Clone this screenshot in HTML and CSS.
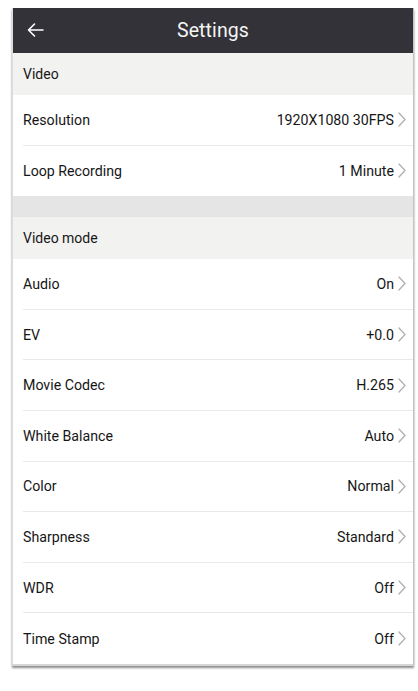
FILE: index.html
```html
<!DOCTYPE html>
<html lang="en">
<head>
<meta charset="utf-8">
<meta name="viewport" content="width=device-width, initial-scale=1.0">
<title>Settings</title>
<link rel="stylesheet" href="styles.css">
</head>
<body>
<div class="phone">
	<div class="bar">
		<button class="back" aria-label="Back">
			<svg width="17" height="14" viewBox="0 0 17 14"><path d="M16 7H1.5M7.5 1L1.5 7l6 6"/></svg>
		</button>
		<h1>Settings</h1>
	</div>

	<div class="group">Video</div>
	<div class="row"><span>Resolution</span><span class="val">1920X1080 30FPS</span><svg class="chev" viewBox="0 0 8 15"><path d="M1 1l6 6.5L1 14"/></svg></div>
	<div class="row last"><span>Loop Recording</span><span class="val">1 Minute</span><svg class="chev" viewBox="0 0 8 15"><path d="M1 1l6 6.5L1 14"/></svg></div>

	<div class="gap"></div>

	<div class="group">Video mode</div>
	<div class="row"><span>Audio</span><span class="val">On</span><svg class="chev" viewBox="0 0 8 15"><path d="M1 1l6 6.5L1 14"/></svg></div>
	<div class="row"><span>EV</span><span class="val">+0.0</span><svg class="chev" viewBox="0 0 8 15"><path d="M1 1l6 6.5L1 14"/></svg></div>
	<div class="row"><span>Movie Codec</span><span class="val">H.265</span><svg class="chev" viewBox="0 0 8 15"><path d="M1 1l6 6.5L1 14"/></svg></div>
	<div class="row"><span>White Balance</span><span class="val">Auto</span><svg class="chev" viewBox="0 0 8 15"><path d="M1 1l6 6.5L1 14"/></svg></div>
	<div class="row"><span>Color</span><span class="val">Normal</span><svg class="chev" viewBox="0 0 8 15"><path d="M1 1l6 6.5L1 14"/></svg></div>
	<div class="row"><span>Sharpness</span><span class="val">Standard</span><svg class="chev" viewBox="0 0 8 15"><path d="M1 1l6 6.5L1 14"/></svg></div>
	<div class="row"><span>WDR</span><span class="val">Off</span><svg class="chev" viewBox="0 0 8 15"><path d="M1 1l6 6.5L1 14"/></svg></div>
	<div class="row last"><span>Time Stamp</span><span class="val">Off</span><svg class="chev" viewBox="0 0 8 15"><path d="M1 1l6 6.5L1 14"/></svg></div>
</div>
</body>
</html>
```

FILE: styles.css
```css
html {background:#fff;}
body {margin:0; padding:8px 5px 20px 12px; font-family:Roboto, "Noto Sans", sans-serif; color:#161616;}
.phone {width:400px; background:#fff; border-right:1px solid #c4c4c4; border-left:1px solid #dcdcdc; border-bottom:2px solid #d6d6d6; box-shadow:0 2px 2px rgba(0,0,0,0.45);}

.bar {position:relative; height:45px; background:#333238; display:flex; align-items:center; justify-content:center;}
.bar h1 {margin:0; font-size:19.5px; font-weight:400; color:#f4f4f4; letter-spacing:0.1px;}
.back {position:absolute; left:14px; top:15px; background:none; border:none; padding:0; margin:0; cursor:pointer; line-height:0;}
.back svg path {fill:none; stroke:#fff; stroke-width:1.6; stroke-linecap:round; stroke-linejoin:round;}

.group {height:42px; background:#f2f2f0; display:flex; align-items:center; padding-left:10px; font-size:14px;}
.gap {height:21px; background:#e5e5e5;}

.row {height:50.6px; box-sizing:border-box; margin-left:10px; padding-right:7px; border-bottom:1px solid #e9e9e9; display:flex; align-items:center; font-size:14.2px;}
.row.last {border-bottom:none;}
.row .val {margin-left:auto; margin-right:4px;}
.chev {width:8px; height:15px;}
.chev path {fill:none; stroke:#b0b0b0; stroke-width:1.3; stroke-linecap:round; stroke-linejoin:round;}
```
